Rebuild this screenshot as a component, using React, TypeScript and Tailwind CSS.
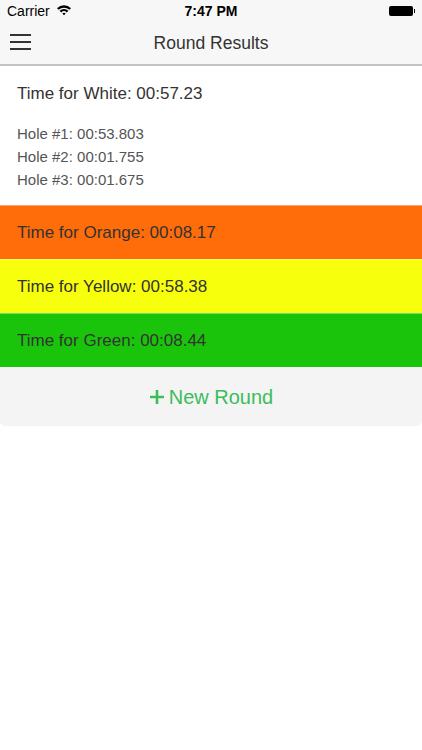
import React from 'react';

const rows = [
    { label: 'Time for Orange: 00:08.17', bg: 'bg-[#ff6c0a]' },
    { label: 'Time for Yellow: 00:58.38', bg: 'bg-[#f7ff0c]' },
    { label: 'Time for Green: 00:08.44', bg: 'bg-[#1ac40b]' },
];

const holes = ['Hole #1: 00:53.803', 'Hole #2: 00:01.755', 'Hole #3: 00:01.675'];

export default function App() {
    return (
        <div className="w-[422px] h-[750px] bg-white font-['Liberation_Sans',Arial,sans-serif] text-[#333]">
            {/* Status bar + nav */}
            <div className="bg-[#f7f7f7]">
                <div className="relative h-[22px] flex items-center px-[7px] text-[14px] text-black">
                    <span>Carrier</span>
                    <svg width="16" height="12" viewBox="0 0 16 12" className="ml-[6px] -mt-[2px]">
                        <path d="M1 4.2 A10 10 0 0 1 15 4.2 L13.4 5.8 A7.8 7.8 0 0 0 2.6 5.8 Z" fill="#000" />
                        <path d="M3.6 6.8 A6.3 6.3 0 0 1 12.4 6.8 L10.8 8.4 A4 4 0 0 0 5.2 8.4 Z" fill="#000" />
                        <path d="M6.3 9.5 A2.4 2.4 0 0 1 9.7 9.5 L8 11.2 Z" fill="#000" />
                    </svg>
                    <span className="absolute left-0 right-0 text-center font-bold text-[14px]">7:47 PM</span>
                    <div className="ml-auto flex items-center">
                        <div className="w-[24px] h-[10px] bg-black rounded-[2px]" />
                        <div className="w-[1.5px] h-[4px] bg-black ml-[1px]" />
                    </div>
                </div>
                <div className="relative h-[42px] flex items-center justify-center">
                    <button className="absolute left-[10px] top-[12px] flex flex-col gap-[5px]">
                        <span className="block w-[21px] h-[2px] bg-[#333]" />
                        <span className="block w-[21px] h-[2px] bg-[#333]" />
                        <span className="block w-[21px] h-[2px] bg-[#333]" />
                    </button>
                    <h1 className="text-[17.5px] text-[#333]">Round Results</h1>
                </div>
                <div className="h-[2px] bg-[#c4c4c4]" />
            </div>

            {/* White result */}
            <div className="px-[17px] pt-[18px] pb-[14px]">
                <div className="text-[17px] leading-[20px]">Time for White: 00:57.23</div>
                <div className="mt-[18px] flex flex-col text-[15px] leading-[23px] text-[#555]">
                    {holes.map((h) => (
                        <div key={h}>{h}</div>
                    ))}
                </div>
            </div>

            {/* Colour rows */}
            {rows.map((r) => (
                <div key={r.label} className={`${r.bg} h-[54px] flex items-center px-[17px] text-[17px] text-[#333] border-t border-white/40`}>
                    {r.label}
                </div>
            ))}

            {/* New round */}
            <button className="w-full h-[59px] bg-[#f4f4f4] rounded-b-[5px] flex items-center justify-center gap-[4px] text-[20px] text-[#3cbc5c] border-t border-white/40">
                <svg width="16" height="16" viewBox="0 0 16 16">
                    <path d="M8 1v14M1 8h14" stroke="#3cbc5c" strokeWidth="2.6" />
                </svg>
                New Round
            </button>
        </div>
    );
}
